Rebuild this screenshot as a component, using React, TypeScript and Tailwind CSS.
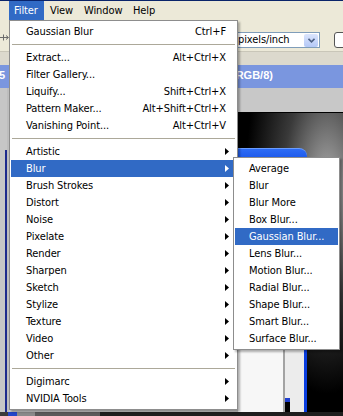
import React from "react";

type Entry = {
  label?: string;
  shortcut?: string;
  sub?: boolean;
  active?: boolean;
  sep?: boolean;
};

const filterItems: Entry[] = [
  { label: "Gaussian Blur", shortcut: "Ctrl+F" },
  { sep: true },
  { label: "Extract...", shortcut: "Alt+Ctrl+X" },
  { label: "Filter Gallery..." },
  { label: "Liquify...", shortcut: "Shift+Ctrl+X" },
  { label: "Pattern Maker...", shortcut: "Alt+Shift+Ctrl+X" },
  { label: "Vanishing Point...", shortcut: "Alt+Ctrl+V" },
  { sep: true },
  { label: "Artistic", sub: true },
  { label: "Blur", sub: true, active: true },
  { label: "Brush Strokes", sub: true },
  { label: "Distort", sub: true },
  { label: "Noise", sub: true },
  { label: "Pixelate", sub: true },
  { label: "Render", sub: true },
  { label: "Sharpen", sub: true },
  { label: "Sketch", sub: true },
  { label: "Stylize", sub: true },
  { label: "Texture", sub: true },
  { label: "Video", sub: true },
  { label: "Other", sub: true },
  { sep: true },
  { label: "Digimarc", sub: true },
  { label: "NVIDIA Tools", sub: true },
];

const blurItems = [
  "Average",
  "Blur",
  "Blur More",
  "Box Blur...",
  "Gaussian Blur...",
  "Lens Blur...",
  "Motion Blur...",
  "Radial Blur...",
  "Shape Blur...",
  "Smart Blur...",
  "Surface Blur...",
];

function Arrow({ white }: { white?: boolean }) {
  return (
    <svg width="4" height="7" viewBox="0 0 4 7" className="shrink-0">
      <path d="M0 0L4 3.5L0 7Z" fill={white ? "#ffffff" : "#000000"} />
    </svg>
  );
}

export default function App() {
  return (
    <div className="relative flex h-[416px] w-[343px] flex-col overflow-hidden bg-[#c3c3c3] font-['DejaVu_Sans_Condensed','DejaVu_Sans',sans-serif] text-[11px] tracking-[-0.1px] text-black">
      <div className="h-px shrink-0 bg-[#0a246a]" />

      {/* menu bar */}
      <div className="flex h-[19px] shrink-0 items-center bg-[#ece9d8] pl-[9px] leading-[19px]">
        <div className="w-[35px] bg-[#316ac5] pl-[5px] text-white">Filter</div>
        <div className="w-[34px] pl-[6px]">View</div>
        <div className="w-[49px] pl-[6px]">Window</div>
        <div className="w-[33px] pl-[6px]">Help</div>
      </div>

      {/* options toolbar */}
      <div className="flex h-[31px] shrink-0 items-start bg-[#ece9d8]">
        <svg width="9" height="9" viewBox="0 0 9 9" className="mt-[13px] shrink-0">
          <path d="M0 4.5H8" stroke="#6b6b6b" strokeWidth="1" />
          <path d="M3.5 1.5V7.5" stroke="#6b6b6b" strokeWidth="1" />
          <path d="M6 2.5L8.5 4.5L6 6.5" stroke="#6b6b6b" fill="none" strokeWidth="1" />
        </svg>
        <div className="flex-1" />
        <div className="mt-[12px] flex h-[16px] w-[96px] shrink-0 items-center border border-[#7f9db9] bg-white pl-[13px] pr-px">
          <span className="flex-1 leading-[14px]">pixels/inch</span>
          <div className="flex h-[13px] w-[14px] items-center justify-center rounded-[2px] bg-gradient-to-b from-[#dbe5fd] to-[#b4c8f6]">
            <svg width="7" height="5" viewBox="0 0 7 5">
              <path d="M0.5 0.8L3.5 3.8L6.5 0.8" stroke="#4d6185" strokeWidth="1.6" fill="none" />
            </svg>
          </div>
        </div>
        <div className="ml-[14px] mt-[12px] h-[16px] w-[18px] shrink-0 -mr-[9px] rounded-[3px] border border-[#555555] bg-white" />
      </div>

      <div className="h-[14px] shrink-0 border-t border-[#c9c6b8] bg-[#dcd9cd]" />

      {/* document title */}
      <div className="flex h-[23px] shrink-0 items-start bg-[#7a96df] pt-[3px] font-['Liberation_Sans',sans-serif] text-[11px] font-bold leading-[14px] tracking-normal text-white">
        <span className="-ml-[1px] w-[233px] shrink-0">5</span>
        <span>(RGB/8)</span>
      </div>

      {/* workspace */}
      <div className="flex min-h-0 flex-1">
        <div className="flex w-[9px] shrink-0">
          <div className="w-[5px] bg-[#c6c6c6]" />
          <div className="flex w-[2px] flex-col">
            <div className="h-[62px] bg-[#c6c6c6]" />
            <div className="flex-1 bg-[#1d2a8c]" />
          </div>
          <div className="w-[2px] bg-[#bdbdbd]" />
        </div>
        <div className="flex-1 bg-[#c8c8c8]" />
        <div className="flex w-[105px] shrink-0 flex-col">
          <div className="h-[24px] bg-[#c8c8c8]" />
          <div className="h-px bg-black" />
          <div className="flex flex-1 flex-col bg-[radial-gradient(ellipse_at_85%_25%,#b0b0b0_0%,#3a3a3a_35%,#000000_65%)] pt-[35px]">
            <div className="flex w-[69px] flex-1 flex-col">
              <div className="h-[22px] rounded-tr-[8px] border-t border-[#6a9cff] bg-gradient-to-b from-[#2d6cf5] to-[#0a3ee0]" />
              <div className="flex flex-1 border-r-[3px] border-[#0a3ee0] bg-white">
                <div className="w-[45px] bg-[#f7f7f7]" />
                <div className="flex w-[2px] flex-col bg-[#a3a3a3]" />
                <div className="flex flex-1 flex-col justify-end bg-[#ececec]">
                  <div className="h-[4px] w-[5px] bg-[#2040d0]" />
                  <div className="h-[10px] w-[5px] bg-black" />
                </div>
              </div>
            </div>
          </div>
        </div>
      </div>

      {/* bottom strip */}
      <div className="flex h-[4px] shrink-0">
        <div className="w-[8px] bg-[#3a3a3a]" />
        <div className="w-[9px] bg-[#2445c8]" />
        <div className="w-[18px] bg-[#8a8a8a]" />
        <div className="w-[65px] bg-[#5a5a5a]" />
        <div className="flex-1 bg-[#1e1e1e]" />
      </div>

      {/* Filter menu */}
      <div className="absolute left-[9px] top-[20px] w-[229px] border border-[#8d8d8d] bg-white px-px py-[2px] shadow-[2px_2px_2px_rgba(0,0,0,0.3)]">
        {filterItems.map((it, i) =>
          it.sep ? (
            <div key={i} className="flex h-[9px] items-center px-px">
              <div className="h-px w-full bg-[#aca899]" />
            </div>
          ) : (
            <div
              key={i}
              className={`flex h-[17px] items-center pl-[15px] pr-[7px] leading-[17px] ${
                it.active ? "bg-[#316ac5] text-white" : "text-black"
              }`}
            >
              <span className="flex-1 whitespace-nowrap">{it.label}</span>
              {it.shortcut && <span className="mr-[3px] whitespace-nowrap">{it.shortcut}</span>}
              {it.sub && <Arrow white={it.active} />}
            </div>
          )
        )}
      </div>

      {/* Blur submenu */}
      <div className="absolute left-[233px] top-[157px] w-[107px] border border-[#8d8d8d] bg-white px-px py-[2px] shadow-[2px_2px_2px_rgba(0,0,0,0.3)]">
        {blurItems.map((label) => (
          <div
            key={label}
            className={`h-[17px] whitespace-nowrap pl-[14px] leading-[17px] ${
              label === "Gaussian Blur..." ? "bg-[#316ac5] text-white" : "text-black"
            }`}
          >
            {label}
          </div>
        ))}
      </div>
    </div>
  );
}
